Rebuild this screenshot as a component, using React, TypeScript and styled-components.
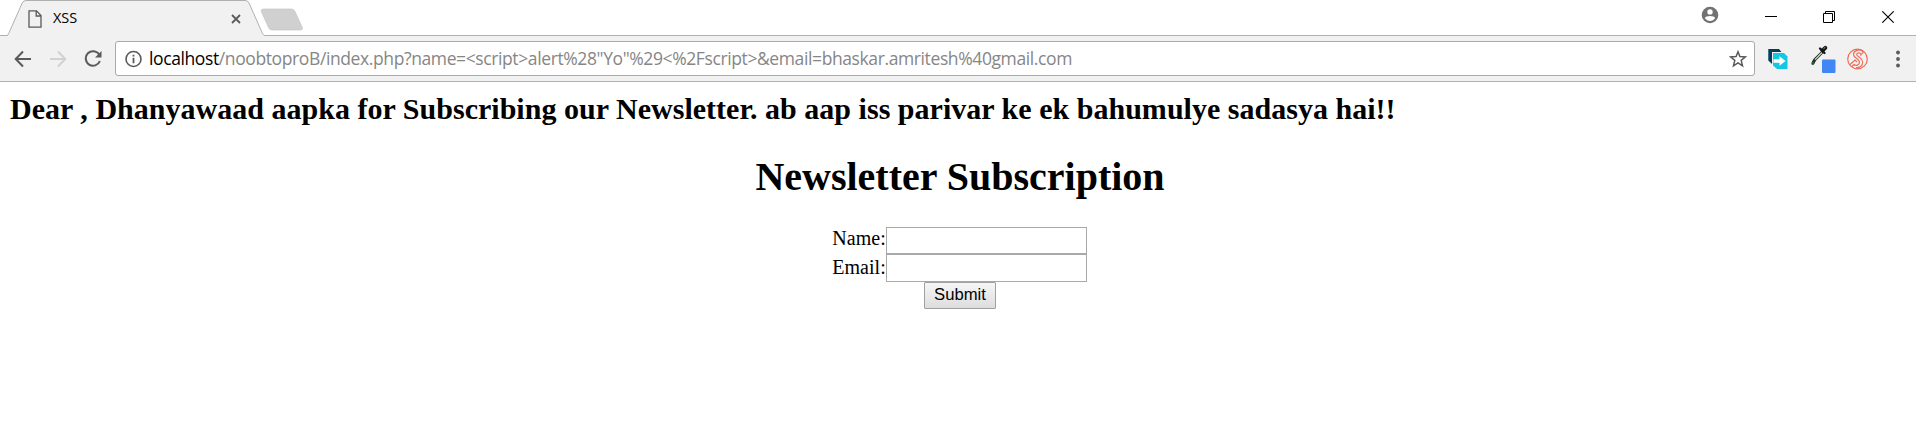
import React from "react";
import styled, { createGlobalStyle } from "styled-components";

const GlobalStyle = createGlobalStyle`
  *, *::before, *::after { box-sizing: border-box; }
  body { margin: 0; background: #fff; color: #000; overflow: hidden; }
`;

const Window = styled.div`
  display: flex;
  flex-direction: column;
  height: 447px;
`;

const TabStrip = styled.header`
  display: flex;
  height: 36px;
  border-bottom: 1px solid #b0b0b0;
  padding-left: 7px;
`;

const Tab = styled.div`
  position: relative;
  width: 258px;
  height: 36px;
  flex: none;
`;

const TabShape = styled.svg`
  position: absolute;
  inset: 0;
`;

const TabContent = styled.div`
  position: relative;
  display: flex;
  align-items: center;
  height: 36px;
  padding: 2px 24px 0 21px;
`;

const TabTitle = styled.span`
  flex: 1;
  margin: -2px 0 0 11px;
  font: 400 14.5px/20px "Open Sans", sans-serif;
  letter-spacing: -0.1px;
`;

const NewTab = styled.svg`
  margin: 8px 0 0 -5px;
`;

const WindowControls = styled.div`
  display: flex;
  align-items: flex-start;
  margin-left: auto;
`;

const Control = styled.svg<{ $top: number; $right: number }>`
  margin: ${(p) => p.$top}px ${(p) => p.$right}px 0 0;
`;

const Toolbar = styled.nav`
  display: flex;
  align-items: center;
  height: 46px;
  padding: 0 10px 0 14px;
  background: #f1f1f1;
  border-bottom: 1px solid #b0b0b0;
`;

const NavIcon = styled.svg<{ $gap: number }>`
  flex: none;
  margin-right: ${(p) => p.$gap}px;
`;

const AddressBar = styled.div`
  display: flex;
  align-items: center;
  width: 1640px;
  height: 35px;
  flex: none;
  padding: 0 7px 0 9px;
  background: #fff;
  border: 1px solid #a9a9a9;
  border-radius: 3px;
`;

const Url = styled.span`
  flex: 1;
  margin: -1px 0 0 7px;
  color: #868686;
  font: 400 17.5px/24px "Open Sans", sans-serif;
  letter-spacing: -0.39px;
  white-space: pre;
`;

const Host = styled.span`
  color: #000;
`;

const Extensions = styled.div`
  display: flex;
  align-items: center;
  height: 35px;
  margin-left: 13px;
`;

const Page = styled.main`
  flex: 1;
  padding: 9px 6px 0 10px;
  font: 20px/27px "Liberation Serif", serif;
`;

const Greeting = styled.h2`
  margin: 0;
  font-size: 30px;
  line-height: 35px;
  letter-spacing: 0.02px;
  white-space: nowrap;
`;

const Title = styled.h1`
  margin: 28px 0 0;
  font-size: 40px;
  line-height: 45px;
  text-align: center;
`;

const Form = styled.form`
  display: flex;
  flex-direction: column;
  align-items: center;
  margin-top: 28px;
`;

const Field = styled.label<{ $line: number }>`
  display: flex;
  margin-right: 1px;
  letter-spacing: 0.05px;
  line-height: ${(p) => p.$line}px;
`;

const Input = styled.input<{ $height: number }>`
  width: 201px;
  height: ${(p) => p.$height}px;
  margin: 0;
  padding: 1px;
  border: 1px solid #a9a9a9;
  border-radius: 0;
  background: #fff;
`;

const Submit = styled.button`
  width: 72px;
  height: 27px;
  margin: 0;
  padding: 0 0 2px;
  border: 1px solid #a0a0a0;
  border-radius: 1px;
  background: linear-gradient(#f6f6f6, #dddddd);
  color: #000;
  font: 16.67px/22px "Liberation Sans", sans-serif;
`;

export default function App() {
  return (
    <Window>
      <GlobalStyle />
      <TabStrip>
        <Tab>
          <TabShape width="258" height="36" viewBox="0 0 258 36">
            <path d="M0 36V35.5Q1 35.5 1.7 33.5L15.2 3Q16.4.5 19 .5H238Q241 .5 242 3L255.500 33.500Q256.500 35.500 258 35.500V36Z" fill="#f1f1f1" />
            <path d="M0 35.500Q1 35.500 1.700 33.500L15.200 3Q16.400 .5 19 .5H238Q241 .5 242 3L255.500 33.500Q256.500 35.500 258 35.500" fill="none" stroke="#b0b0b0" />
          </TabShape>
          <TabContent>
            <svg width="14" height="18" viewBox="0 0 14 18" fill="none" stroke="#5a5a5a" strokeWidth="1.300">
              <path d="M1 .8H8.500L13 5.500V17.200H1ZM8.200 1V6H13" />
            </svg>
            <TabTitle>XSS</TabTitle>
            <svg width="10" height="10" viewBox="0 0 10 10" stroke="#5a5a5a" strokeWidth="1.800">
              <path d="M1 1L9 9M9 1L1 9" />
            </svg>
          </TabContent>
        </Tab>
        <NewTab width="45" height="23" viewBox="0 0 45 23">
          <path d="M3.500 1H31.500Q34 1 35 3.500L42.300 19.500Q43 22 40.500 22H12Q9.500 22 8.500 19.500L1.300 3.500Q.5 1 3.500 1Z" fill="#d0d0d0" stroke="#c6c6c6" strokeWidth=".7" />
        </NewTab>
        <WindowControls>
          <Control $top={6} $right={46} width="18" height="18" viewBox="0 0 18 18">
            <circle cx="9" cy="9" r="8.300" fill="#727272" />
            <circle cx="9" cy="5.900" r="2.700" fill="#fff" />
            <path d="M3.800 12C4.500 9.200 13.500 9.200 14.200 12C12.900 14 11.100 15 9 15S5.100 14 3.800 12Z" fill="#fff" />
          </Control>
          <Control $top={16} $right={46} width="12" height="1" viewBox="0 0 12 1">
            <path d="M0 .5H12" stroke="#000" />
          </Control>
          <Control $top={11} $right={47} width="12" height="12" viewBox="0 0 12 12" fill="none" stroke="#000">
            <path d="M.5 2.500H9.500V11.500H.5ZM2.500 2.500V.5H11.500V9.500H9.500" />
          </Control>
          <Control $top={11} $right={22} width="12" height="12" viewBox="0 0 12 12" stroke="#000" strokeWidth="1.100">
            <path d="M.3 .3L11.700 11.700M11.700 .3L.3 11.700" />
          </Control>
        </WindowControls>
      </TabStrip>
      <Toolbar>
        <NavIcon $gap={18} width="18" height="18" viewBox="0 0 18 18" fill="none" stroke="#5a5a5a" strokeWidth="2">
          <path d="M17 9H2.500M9 1.500L1.700 9L9 16.500" />
        </NavIcon>
        <NavIcon $gap={16} width="18" height="18" viewBox="0 0 18 18" fill="none" stroke="#d2d2d2" strokeWidth="2">
          <path d="M0 9H14.500M8 1.500L15.300 9L8 16.500" />
        </NavIcon>
        <NavIcon $gap={13} width="18" height="18" viewBox="0 0 18 18">
          <path d="M15.200 4.500A7.300 7.300 0 1 0 15.900 11" fill="none" stroke="#5a5a5a" strokeWidth="2" />
          <path d="M17.500 1V7.500H11Z" fill="#5a5a5a" />
        </NavIcon>
        <AddressBar>
          <svg width="17" height="18" viewBox="0 0 17 18">
            <circle cx="8.500" cy="9" r="7.500" fill="none" stroke="#5a5a5a" strokeWidth="1.600" />
            <path d="M7.600 7.800H9.400V13.200H7.600ZM7.600 4.800H9.400V6.500H7.600Z" fill="#5a5a5a" />
          </svg>
          <Url><Host>localhost</Host>{'/noobtoproB/index.php?name=<script>alert%28"Yo"%29<%2Fscript>&email=bhaskar.amritesh%40gmail.com'}</Url>
          <svg width="18" height="18" viewBox="0 0 18 18" fill="none" stroke="#5a5a5a" strokeWidth="1.500">
            <path d="M9 1.800L10.900 6.600L16.300 7L12.200 10.400L13.500 15.800L9 12.900L4.500 15.800L5.800 10.400L1.700 7L7.100 6.600Z" />
          </svg>
        </AddressBar>
        <Extensions>
          <NavIcon $gap={23} width="20" height="22" viewBox="0 0 20 22">
            <path d="M.3 1H11L13.500 4H4V16L.3 12.500Z" fill="#003e60" />
            <path d="M5 5H16L19.500 8.500V21H9L5 17.500Z" fill="#13c8e5" />
            <path d="M5.500 11.300H11.500V8.300L17.500 13L11.500 17.700V14.700H5.500Z" fill="#fff" />
          </NavIcon>
          <NavIcon $gap={11} width="25" height="28" viewBox="0 0 25 28">
            <path d="M12 6.500L4 14.500Q2.500 16.500 2 18.500" fill="none" stroke="#25322a" strokeWidth="3" />
            <path d="M11 7.500L4 14.700" stroke="#c9e2cf" strokeWidth="1.200" />
            <circle cx="1.800" cy="18.600" r="1.500" fill="#26613a" />
            <path d="M9 3.500L13.500 8" stroke="#151515" strokeWidth="2.300" strokeLinecap="round" />
            <path d="M11.500 5.500L14.300 2.900" stroke="#151515" strokeWidth="4" strokeLinecap="round" />
            <path d="M12.500 3.700L14.300 2.300" stroke="#aaa" />
            <rect x="11" y="14.500" width="13.500" height="13.500" rx="1" fill="#4285f4" />
          </NavIcon>
          <NavIcon $gap={28} width="21" height="22" viewBox="0 0 21 22" fill="none" stroke="#f06b56">
            <circle cx="10.500" cy="11" r="9.800" strokeWidth="1.200" />
            <path d="M16.500 4C13 .2 6.500 2.500 6.500 6.500C6.500 10 12 10.500 12.500 14C12.500 17 9 18.500 7 16.500L4.500 18.800" strokeWidth="1.200" />
            <path d="M14.500 6.500C12.500 3.800 9.200 5 9.800 7C10.700 9 15.500 10 15.700 14C15.700 18 12.500 20 9 19.500M3 16.500L8 12L10 14M16.500 4L13.300 7.700" strokeWidth="1.100" />
          </NavIcon>
          <svg width="4" height="18" viewBox="0 0 4 18" fill="#5a5a5a">
            <circle cx="2" cy="2.500" r="1.900" />
            <circle cx="2" cy="9" r="1.900" />
            <circle cx="2" cy="15.500" r="1.900" />
          </svg>
        </Extensions>
      </Toolbar>
      <Page>
        <Greeting>Dear , Dhanyawaad aapka for Subscribing our Newsletter. ab aap iss parivar ke ek bahumulye sadasya hai!!</Greeting>
        <Title>Newsletter Subscription</Title>
        <Form onSubmit={(e) => e.preventDefault()}>
          <Field $line={23}>Name:<Input $height={27} /></Field>
          <Field $line={26}>Email:<Input $height={28} /></Field>
          <Submit>Submit</Submit>
        </Form>
      </Page>
    </Window>
  );
}
